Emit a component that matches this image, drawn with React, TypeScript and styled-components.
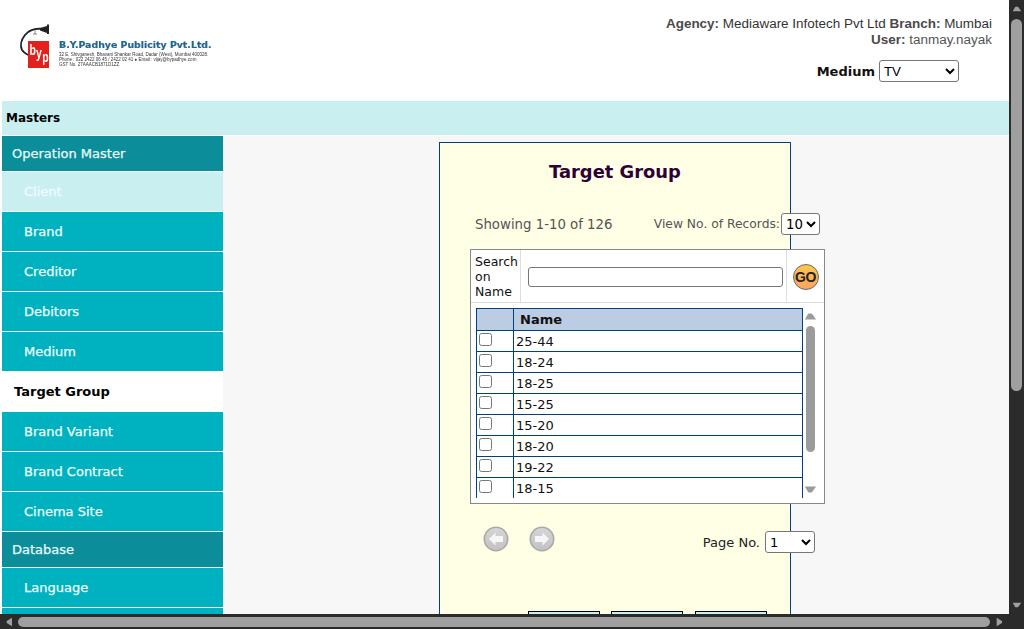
import { createGlobalStyle, styled } from 'styled-components';

const GlobalStyle = createGlobalStyle`
  html, body {
    margin: 0;
    height: 100%;
    overflow: hidden;
    background: #fff;
  }
  * { box-sizing: border-box; }
`;

const verdana = `"DejaVu Sans", Verdana, sans-serif`;
const arial = `"Liberation Sans", Arial, sans-serif`;

const Shell = styled.div`
  display: grid;
  grid-template-columns: 1009px 15px;
  grid-template-rows: 614px 15px;
  width: 1024px;
  height: 629px;
  background: #2b2b2b;
`;

const Page = styled.div`
  background: #fff;
  overflow: hidden;
  padding-left: 2px;
`;

const VBar = styled.div`
  display: flex;
  flex-direction: column;
  align-items: center;
  padding: 4px 0 4px;
`;

const HBar = styled.div`
  grid-column: 1 / 3;
  display: flex;
  align-items: center;
  padding: 0 20px 0 4px;
`;

const VThumb = styled.div`
  width: 11px;
  height: 372px;
  margin-top: 5px;
  margin-bottom: auto;
  border-radius: 6px;
  background: #9f9f9f;
`;

const HThumb = styled.div`
  width: 972px;
  height: 10px;
  margin: 0 auto 0 4px;
  border-radius: 6px;
  background: #9f9f9f;
`;

const Header = styled.header`
  display: flex;
  justify-content: space-between;
  height: 101px;
`;

const Logo = styled.div`
  display: flex;
  align-items: flex-end;
  height: 47px;
  margin: 24px 0 0 15px;
  filter: blur(0.4px);
`;

const LogoText = styled.div`
  display: flex;
  flex-direction: column;
  padding-bottom: 4px;
  font-family: ${arial};
  font-size: 4.5px;
  line-height: 5px;
  color: #333;
  white-space: nowrap;
`;

const LogoName = styled.div`
  font-family: ${verdana};
  font-weight: 700;
  font-size: 9.4px;
  line-height: 12px;
  color: #1f6690;
  margin-bottom: 1px;
  -webkit-text-stroke: 0.2px #1f6690;
`;

const HeaderInfo = styled.div`
  display: flex;
  flex-direction: column;
  align-items: flex-end;
  padding: 16px 17px 0 0;
`;

const InfoLine = styled.div<{ $muted?: boolean }>`
  font-family: ${arial};
  font-size: 13.46px;
  line-height: 16px;
  color: ${(p) => (p.$muted ? '#555' : '#333')};
  white-space: nowrap;

  b {
    font-weight: 700;
    color: #4a4a4a;
  }
`;

const MediumRow = styled.div`
  display: flex;
  align-items: center;
  gap: 4px;
  margin: 12px 33px 0 0;
`;

const MediumLabel = styled.label`
  font-family: ${verdana};
  font-weight: 700;
  font-size: 13px;
  color: #111;
`;

const NativeSelect = styled.select<{ $w: number }>`
  width: ${(p) => p.$w}px;
  height: 22px;
  padding: 0;
  font-family: ${arial};
  font-size: 13.3px;
  color: #000;
  background-color: #fff;
  border: 1px solid #767676;
  border-radius: 3px;
`;

const MastersBar = styled.div`
  height: 34px;
  display: flex;
  align-items: center;
  padding-left: 4px;
  background: #caeff1;
  font-family: ${verdana};
  font-weight: 700;
  font-size: 12px;
  color: #000;
`;

const Body = styled.div`
  display: flex;
  height: 479px;
  margin-top: 1px;
`;

const Sidebar = styled.nav`
  display: flex;
  flex-direction: column;
  gap: 1px;
  flex: none;
  width: 221px;
  background: #fff;
  overflow: hidden;
  font-family: ${verdana};
  font-size: 13px;
`;

const GroupHead = styled.div`
  flex: none;
  height: 35px;
  display: flex;
  align-items: center;
  padding-left: 10px;
  color: #e8fbfc;
  background: #0b8e99;
  -webkit-text-stroke: 0.25px #e8fbfc;
`;

const MenuItem = styled.div<{ $state?: 'visited' | 'active' }>`
  flex: none;
  height: 39px;
  display: flex;
  align-items: center;
  padding-left: ${(p) => (p.$state === 'active' ? 12 : 22)}px;
  color: ${(p) => (p.$state === 'active' ? '#000' : '#eefdfe')};
  background: ${(p) =>
    p.$state === 'active' ? '#fff' : p.$state === 'visited' ? '#caeff1' : '#00b2bf'};
  font-weight: ${(p) => (p.$state === 'active' ? 700 : 400)};
  -webkit-text-stroke: ${(p) => (p.$state === 'active' ? '0' : '0.25px #eefdfe')};
`;

const Content = styled.main`
  flex: 1;
  background: #f7f7f7;
  padding: 6px 0 0 216px;
  overflow: hidden;
`;

const Card = styled.section`
  width: 352px;
  height: 640px;
  border: 1px solid #004080;
  background: #ffffe6;
  font-family: ${verdana};
`;

const Title = styled.h1`
  margin: 18px 0 0;
  text-align: center;
  font-size: 17.9px;
  line-height: 22px;
  font-weight: 700;
  color: #2e0038;
`;

const RecordsRow = styled.div`
  display: flex;
  align-items: center;
  width: 345px;
  margin: 30px 0 0 35px;
  color: #555;
  white-space: nowrap;
`;

const Showing = styled.span`
  margin-right: auto;
  font-size: 13.3px;
`;

const RecordsLabel = styled.span`
  font-size: 12.3px;
`;

const RecordsSelect = styled(NativeSelect)`
  margin-left: 1px;
  font-family: ${verdana};
`;

const ListPanel = styled.div`
  width: 355px;
  height: 255px;
  margin: 14px 0 0 30px;
  border: 1px solid #888;
  background: #fff;
`;

const SearchRow = styled.div`
  display: grid;
  grid-template-columns: 50px 266px 1fr;
  height: 53px;
  border-bottom: 1px solid #ddd;
  font-size: 12.5px;
  line-height: 15px;
  color: #111;
`;

const SearchLabel = styled.div`
  display: flex;
  align-items: center;
  padding-left: 4px;
  border-right: 1px solid #ddd;
`;

const SearchCell = styled.div`
  display: flex;
  align-items: center;
  padding: 2px 0 0 7px;
  border-right: 1px solid #ddd;
`;

const SearchInput = styled.input`
  width: 255px;
  height: 20px;
  border: 1px solid #767676;
  border-radius: 3px;
  background: #fff;
`;

const GoCell = styled.div`
  display: flex;
  align-items: center;
  justify-content: center;
  padding-top: 2px;
`;

const GoButton = styled.button`
  width: 26px;
  height: 26px;
  padding: 0;
  border: 1px solid #666;
  border-radius: 50%;
  background: linear-gradient(#fdc74e, #fda45f);
  font-family: ${arial};
  font-weight: 700;
  font-size: 14px;
  letter-spacing: -0.5px;
  color: #222;
`;

const ListBody = styled.div`
  display: flex;
  height: 190px;
  margin: 5px 0 0 5px;
`;

const ListClip = styled.div`
  width: 327px;
  overflow: hidden;
`;

const GridTable = styled.table`
  width: 327px;
  border-collapse: collapse;
  table-layout: fixed;
  font-size: 13px;
  color: #111;

  th, td {
    padding: 0;
    border: 1px solid #004080;
    height: 21px;
    text-align: left;
  }

  th {
    height: 22px;
    padding-left: 6px;
    background: #bccde3;
    font-weight: 700;
  }

  td + td {
    padding: 1px 0 0 2px;
  }

  input {
    display: block;
    width: 13px;
    height: 13px;
    margin: 0 0 3px 2px;
  }
`;

const ListScroll = styled.div`
  display: flex;
  flex-direction: column;
  align-items: center;
  width: 13px;
  margin-left: 1px;
  padding: 2px 0;
`;

const ListThumb = styled.div`
  flex: none;
  width: 9px;
  height: 126px;
  margin-top: 3px;
  margin-bottom: auto;
  border-radius: 5px;
  background: #9b9b9b;
`;

const PagerRow = styled.div`
  display: flex;
  align-items: center;
  width: 375px;
  margin-top: 21px;
  padding-left: 43px;
  gap: 20px;
  font-size: 13px;
  color: #222;
`;

const PageNo = styled.div`
  display: flex;
  align-items: center;
  gap: 5px;
  margin: 6px 0 0 auto;
  white-space: nowrap;
`;

const PageSelect = styled(NativeSelect)`
  font-family: ${verdana};
  font-size: 13px;
`;

const Actions = styled.div`
  display: flex;
  gap: 11px;
  margin: 58px 0 0 88px;
`;

const ActionButton = styled.button`
  width: 72px;
  height: 26px;
  border: 1px solid #000;
  background: #caeff1;

  &:nth-child(3) {
    margin-left: 1px;
  }
`;

const Arrow = ({ dir, size, color }: { dir: 'up' | 'down' | 'left' | 'right'; size: number; color: string }) => {
  const points = {
    up: '1,9 5,2 9,2 14,9',
    down: '1,2 14,2 9,9 5,9',
    left: '10,1 10,14 2,9 2,6',
    right: '2,1 2,14 10,9 10,6',
  }[dir];
  return (
    <svg width={size} height={size} viewBox={dir === 'up' || dir === 'down' ? '0 0 15 11' : '0 0 11 15'} fill={color}>
      <polygon points={points} />
    </svg>
  );
};

const PagerIcon = ({ flip }: { flip?: boolean }) => (
  <svg width="26" height="26" viewBox="0 0 26 26">
    <defs>
      <linearGradient id={flip ? 'pg2' : 'pg1'} x1="0" y1="0" x2="0" y2="1">
        <stop offset="0" stopColor="#d6d6d6" />
        <stop offset="1" stopColor="#c2c2c2" />
      </linearGradient>
    </defs>
    <circle cx="13" cy="13" r="11.7" fill={`url(#${flip ? 'pg2' : 'pg1'})`} stroke="#a9a9a9" strokeWidth="1.6" />
    <path
      d="M6 13 L12.5 6.5 V10 H20 V16 H12.5 V19.5 Z"
      fill="#f6f6f6"
      transform={flip ? 'rotate(180 13 13)' : undefined}
    />
  </svg>
);

const LogoMark = () => (
  <svg width="42" height="47" viewBox="0 0 42 47">
    <path d="M26 5 C18 4 12 6 8 11 C4 16 3 22 5 26 C7 29 9 30 11 31" fill="none" stroke="#222" strokeWidth="1.9" />
    <path d="M23 4 L30 2 V9 L23 6.5 Z" fill="#222" />
    <rect x="30" y="0.5" width="2" height="9.5" fill="#222" />
    <path d="M18 6 V10 M16 10 H20" stroke="#888" strokeWidth="1" />
    <rect x="11" y="17" width="21" height="27" fill="#e3211c" />
    <text fill="#fff" fontFamily={arial} fontWeight="700" fontSize="10.5" transform="scale(1 1.45)">
      <tspan x="12.5" y="21.5">b</tspan>
      <tspan x="19" y="23.5">y</tspan>
      <tspan x="25.2" y="26">p</tspan>
    </text>
  </svg>
);

const menuTop = ['Brand', 'Creditor', 'Debitors', 'Medium'];
const menuRest = ['Brand Variant', 'Brand Contract', 'Cinema Site'];
const rows = ['25-44', '18-24', '18-25', '15-25', '15-20', '18-20', '19-22', '18-15'];

export default function App() {
  return (
    <Shell>
      <GlobalStyle />
      <Page>
        <Header>
          <Logo>
            <LogoMark />
            <LogoText>
              <LogoName>B.Y.Padhye Publicity Pvt.Ltd.</LogoName>
              <span>32 E, Shivganesh, Bhavani Shankar Road, Dadar (West), Mumbai 400028.</span>
              <span>Phone : 022 2422 06 45 / 2422 02 41 ● Email : vijay@bypadhye.com</span>
              <span>GST No. 27AAACB1871D1ZZ</span>
            </LogoText>
          </Logo>
          <HeaderInfo>
            <InfoLine>
              <b>Agency:</b> Mediaware Infotech Pvt Ltd <b>Branch:</b> Mumbai
            </InfoLine>
            <InfoLine $muted>
              <b>User:</b> tanmay.nayak
            </InfoLine>
            <MediumRow>
              <MediumLabel>Medium</MediumLabel>
              <NativeSelect $w={80} defaultValue="TV">
                <option>TV</option>
              </NativeSelect>
            </MediumRow>
          </HeaderInfo>
        </Header>
        <MastersBar>Masters</MastersBar>
        <Body>
          <Sidebar>
            <GroupHead>Operation Master</GroupHead>
            <MenuItem $state="visited">Client</MenuItem>
            {menuTop.map((m) => (
              <MenuItem key={m}>{m}</MenuItem>
            ))}
            <MenuItem $state="active">Target Group</MenuItem>
            {menuRest.map((m) => (
              <MenuItem key={m}>{m}</MenuItem>
            ))}
            <GroupHead>Database</GroupHead>
            <MenuItem>Language</MenuItem>
            <MenuItem />
          </Sidebar>
          <Content>
            <Card>
              <Title>Target Group</Title>
              <RecordsRow>
                <Showing>Showing 1-10 of 126</Showing>
                <RecordsLabel>View No. of Records:</RecordsLabel>
                <RecordsSelect $w={39} defaultValue="10">
                  <option>10</option>
                </RecordsSelect>
              </RecordsRow>
              <ListPanel>
                <SearchRow>
                  <SearchLabel>Search on Name</SearchLabel>
                  <SearchCell>
                    <SearchInput type="text" />
                  </SearchCell>
                  <GoCell>
                    <GoButton type="button">GO</GoButton>
                  </GoCell>
                </SearchRow>
                <ListBody>
                  <ListClip>
                    <GridTable>
                      <colgroup>
                        <col width="37" />
                        <col />
                      </colgroup>
                      <thead>
                        <tr>
                          <th />
                          <th>Name</th>
                        </tr>
                      </thead>
                      <tbody>
                        {rows.map((r) => (
                          <tr key={r}>
                            <td>
                              <input type="checkbox" />
                            </td>
                            <td>{r}</td>
                          </tr>
                        ))}
                      </tbody>
                    </GridTable>
                  </ListClip>
                  <ListScroll>
                    <Arrow dir="up" size={13} color="#9b9b9b" />
                    <ListThumb />
                    <Arrow dir="down" size={13} color="#9b9b9b" />
                  </ListScroll>
                </ListBody>
              </ListPanel>
              <PagerRow>
                <PagerIcon />
                <PagerIcon flip />
                <PageNo>
                  Page No.
                  <PageSelect $w={50} defaultValue="1">
                    <option>1</option>
                  </PageSelect>
                </PageNo>
              </PagerRow>
              <Actions>
                <ActionButton type="button" />
                <ActionButton type="button" />
                <ActionButton type="button" />
              </Actions>
            </Card>
          </Content>
        </Body>
      </Page>
      <VBar>
        <Arrow dir="up" size={10} color="#9f9f9f" />
        <VThumb />
        <Arrow dir="down" size={10} color="#9f9f9f" />
      </VBar>
      <HBar>
        <Arrow dir="left" size={10} color="#9f9f9f" />
        <HThumb />
        <Arrow dir="right" size={10} color="#9f9f9f" />
      </HBar>
    </Shell>
  );
}
